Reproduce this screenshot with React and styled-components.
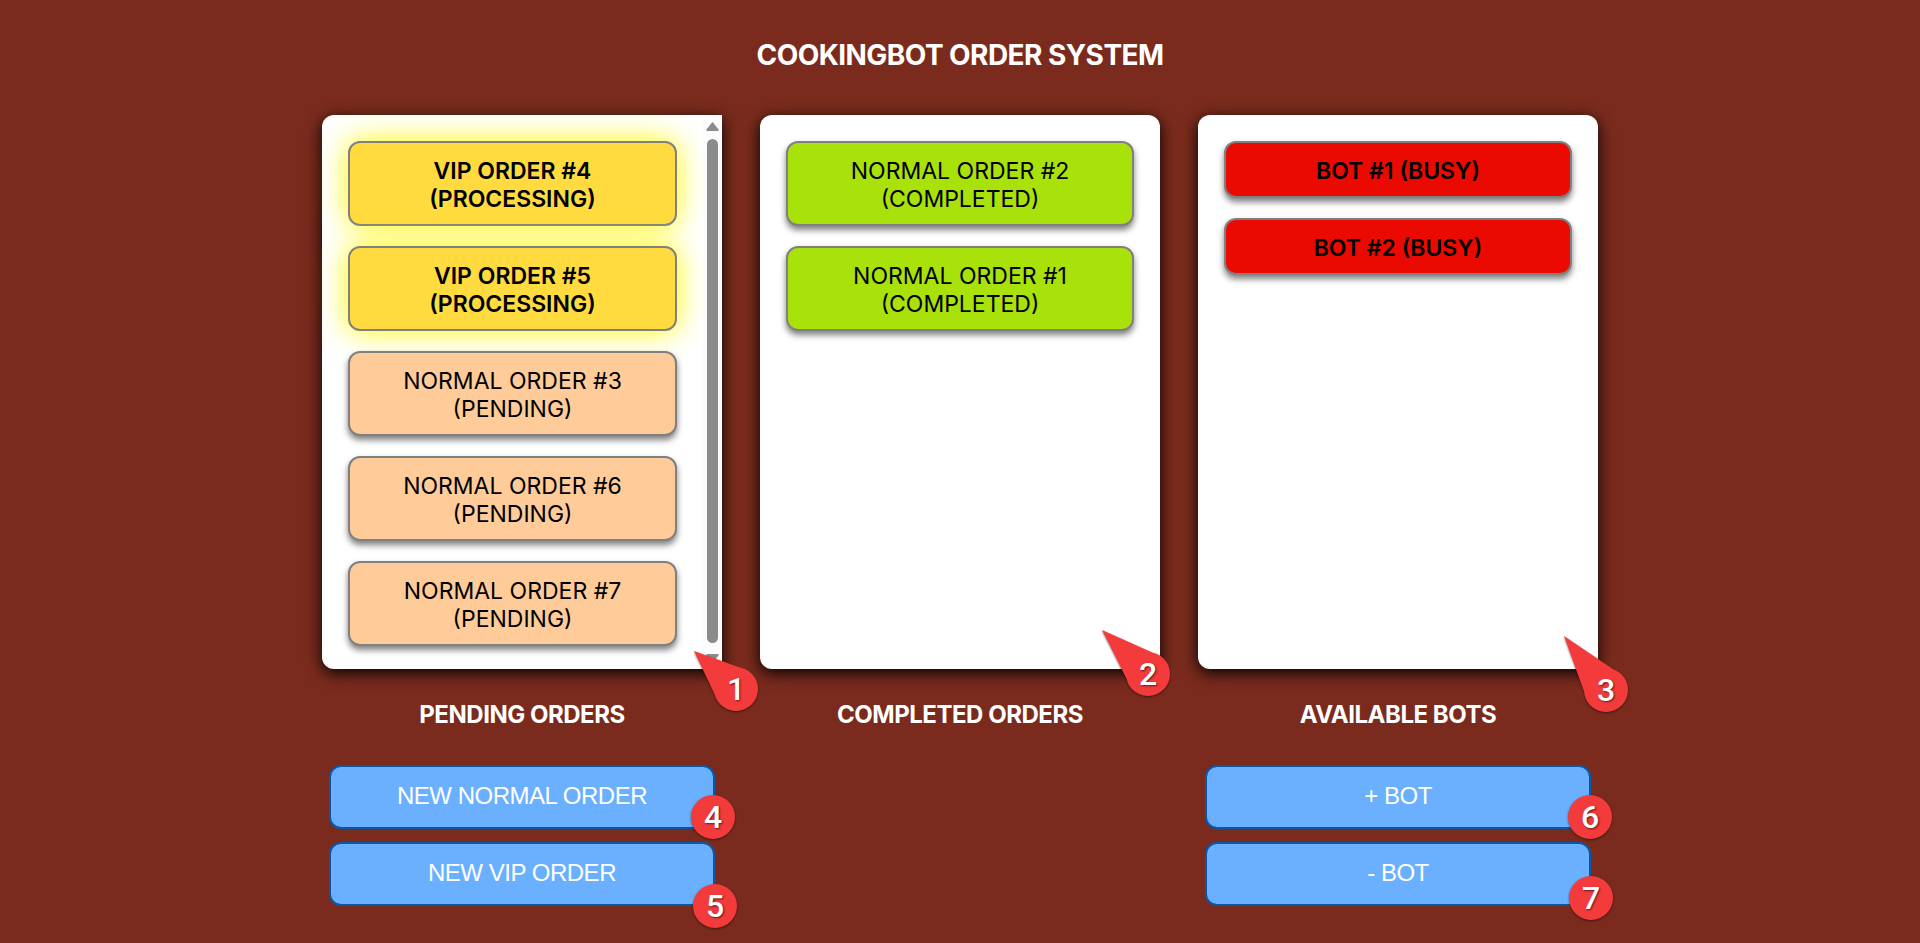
import React from "react";
import styled, { createGlobalStyle, css } from "styled-components";

const GlobalStyle = createGlobalStyle`
  *, *::before, *::after { box-sizing: border-box; }
  body {
    margin: 0;
    background: #7a2b1d;
    color: #000;
    font-family: Inter, "Liberation Sans", sans-serif;
    font-size: 23px;
    line-height: 28px;
  }
`;

const Page = styled.main`
  min-height: 100vh;
  padding: 38px 24px 37px;
  background: #7a2b1d;
`;

const Title = styled.h1`
  margin: 0 0 43px;
  color: #fff;
  font-size: 28px;
  line-height: 34px;
  font-weight: 700;
  letter-spacing: -0.02em;
  text-align: center;
`;

const Columns = styled.div`
  display: grid;
  grid-template-columns: repeat(3, minmax(0, 400px));
  justify-content: center;
  column-gap: 38px;
`;

const Column = styled.section`
  display: flex;
  flex-direction: column;
`;

const Panel = styled.div`
  position: relative;
  display: flex;
  flex: 1;
  background: #fff;
  border-radius: ${(p) => (p.$scrolls ? "12px 0 0 12px" : "12px")};
  box-shadow: 0 4px 16px #000;
`;

const CardList = styled.ul`
  display: flex;
  flex: 1;
  flex-direction: column;
  gap: 20px;
  min-width: 0;
  margin: 0;
  padding: 26px 26px 23px;
  list-style: none;
`;

const tones = {
  vip: css`
    background: #ffdb40;
    font-weight: 600;
    box-shadow: 0 0 30px #fff700;
  `,
  pending: css`
    background: #ffcc99;
  `,
  completed: css`
    background: #a9e20a;
  `,
  busy: css`
    background: #eb0a02;
    font-weight: 600;
  `,
};

const Card = styled.li`
  padding: 14px 12px 11px;
  border: 2px solid #808080;
  border-radius: 12px;
  box-shadow: 0 4px 6px rgba(0, 0, 0, 0.5);
  text-align: center;
  ${(p) => tones[p.$tone]}
`;

const Line = styled.span`
  display: block;
`;

const ScrollTrack = styled.div`
  display: flex;
  flex-direction: column;
  align-items: center;
  justify-content: space-between;
  gap: 8px;
  width: 19px;
  padding: 7px 0 6px;
  background: #fcfcfc;
`;

const ScrollThumb = styled.div`
  flex: 1;
  width: 11px;
  margin-bottom: 3px;
  border-radius: 6px;
  background: #8b8b8b;
`;

const ColumnTitle = styled.h2`
  margin: 32px 0 36px;
  color: #fff;
  font-size: 24px;
  line-height: 28px;
  font-weight: 700;
  letter-spacing: -0.02em;
  text-align: center;
`;

const Controls = styled.div`
  display: flex;
  flex-direction: column;
  gap: 13px;
  padding: 0 7px;
`;

const ButtonSlot = styled.div`
  position: relative;
  display: flex;
`;

const ActionButton = styled.button`
  flex: 1;
  padding: 15px 16px 17px;
  border: 2px solid #0a56a8;
  border-radius: 12px;
  background: #6ab0ff;
  color: #fff;
  font-family: "Liberation Sans", Arial, sans-serif;
  font-size: 24px;
  line-height: 28px;
  letter-spacing: -0.02em;
  cursor: pointer;
`;

const MarkerBox = styled.div`
  position: absolute;
  z-index: 1;
  right: ${(p) => p.$right}px;
  bottom: ${(p) => p.$bottom}px;
  display: grid;
  place-items: center;
  width: 44px;
  height: 44px;
  color: #fff;
  font-family: Roboto, "Liberation Sans", sans-serif;
  font-size: 32px;
  line-height: 44px;
  font-weight: 500;
  text-shadow: 1px 1px 2px rgba(0, 0, 0, 0.6);
  pointer-events: none;
`;

const MarkerShape = styled.svg`
  position: absolute;
  inset: 0;
  overflow: visible;
  filter: drop-shadow(0 1px 1px rgba(0, 0, 0, 0.5));
`;

const MarkerDigit = styled.span`
  position: relative;
`;

const RADIUS = 22;
const SPREAD = (56 * Math.PI) / 180;

function pointerPoints([x, y]) {
  const angle = Math.atan2(y, x);
  const edge = (a) => `${RADIUS * Math.cos(a)},${RADIUS * Math.sin(a)}`;
  return `${x},${y} ${edge(angle + SPREAD)} 0,0 ${edge(angle - SPREAD)}`;
}

function Marker({ label, right, bottom, tip }) {
  return (
    <MarkerBox $right={right} $bottom={bottom}>
      <MarkerShape width="44" height="44" viewBox="-22 -22 44 44" fill="#f33b3c" aria-hidden="true">
        <circle r={RADIUS} />
        {tip && <polygon points={pointerPoints(tip)} />}
      </MarkerShape>
      <MarkerDigit>{label}</MarkerDigit>
    </MarkerBox>
  );
}

function Scrollbar() {
  return (
    <ScrollTrack aria-hidden="true">
      <svg width="13" height="9" viewBox="0 0 13 9">
        <path d="M6.5 1.2 L11.8 8 H1.2 Z" fill="#8b8b8b" stroke="#8b8b8b" strokeWidth="1.8" strokeLinejoin="round" />
      </svg>
      <ScrollThumb />
      <svg width="13" height="9" viewBox="0 0 13 9">
        <path d="M6.5 7.8 L11.8 1 H1.2 Z" fill="#8b8b8b" stroke="#8b8b8b" strokeWidth="1.8" strokeLinejoin="round" />
      </svg>
    </ScrollTrack>
  );
}

const columns = [
  {
    title: "PENDING ORDERS",
    scrolls: true,
    marker: { label: "1", right: -36, bottom: -42, tip: [-42, -38] },
    cards: [
      { tone: "vip", lines: ["VIP ORDER #4", "(PROCESSING)"] },
      { tone: "vip", lines: ["VIP ORDER #5", "(PROCESSING)"] },
      { tone: "pending", lines: ["NORMAL ORDER #3", "(PENDING)"] },
      { tone: "pending", lines: ["NORMAL ORDER #6", "(PENDING)"] },
      { tone: "pending", lines: ["NORMAL ORDER #7", "(PENDING)"] },
    ],
    actions: [
      { text: "NEW NORMAL ORDER", marker: { label: "4", right: -20, bottom: -10 } },
      { text: "NEW VIP ORDER", marker: { label: "5", right: -22, bottom: -22 } },
    ],
  },
  {
    title: "COMPLETED ORDERS",
    marker: { label: "2", right: -10, bottom: -27, tip: [-46, -44] },
    cards: [
      { tone: "completed", lines: ["NORMAL ORDER #2", "(COMPLETED)"] },
      { tone: "completed", lines: ["NORMAL ORDER #1", "(COMPLETED)"] },
    ],
    actions: [],
  },
  {
    title: "AVAILABLE BOTS",
    marker: { label: "3", right: -30, bottom: -43, tip: [-42, -54] },
    cards: [
      { tone: "busy", lines: ["BOT #1 (BUSY)"] },
      { tone: "busy", lines: ["BOT #2 (BUSY)"] },
    ],
    actions: [
      { text: "+ BOT", marker: { label: "6", right: -21, bottom: -10 } },
      { text: "- BOT", marker: { label: "7", right: -22, bottom: -14 } },
    ],
  },
];

export default function App() {
  return (
    <>
      <GlobalStyle />
      <Page>
        <Title>COOKINGBOT ORDER SYSTEM</Title>
        <Columns>
          {columns.map((column) => (
            <Column key={column.title}>
              <Panel $scrolls={column.scrolls}>
                <CardList>
                  {column.cards.map((card) => (
                    <Card key={card.lines[0]} $tone={card.tone}>
                      {card.lines.map((line) => (
                        <Line key={line}>{line}</Line>
                      ))}
                    </Card>
                  ))}
                </CardList>
                {column.scrolls && <Scrollbar />}
                <Marker {...column.marker} />
              </Panel>
              <ColumnTitle>{column.title}</ColumnTitle>
            </Column>
          ))}
        </Columns>
        <Columns>
          {columns.map((column) => (
            <Controls key={column.title}>
              {column.actions.map((action) => (
                <ButtonSlot key={action.text}>
                  <ActionButton type="button">{action.text}</ActionButton>
                  <Marker {...action.marker} />
                </ButtonSlot>
              ))}
            </Controls>
          ))}
        </Columns>
      </Page>
    </>
  );
}
